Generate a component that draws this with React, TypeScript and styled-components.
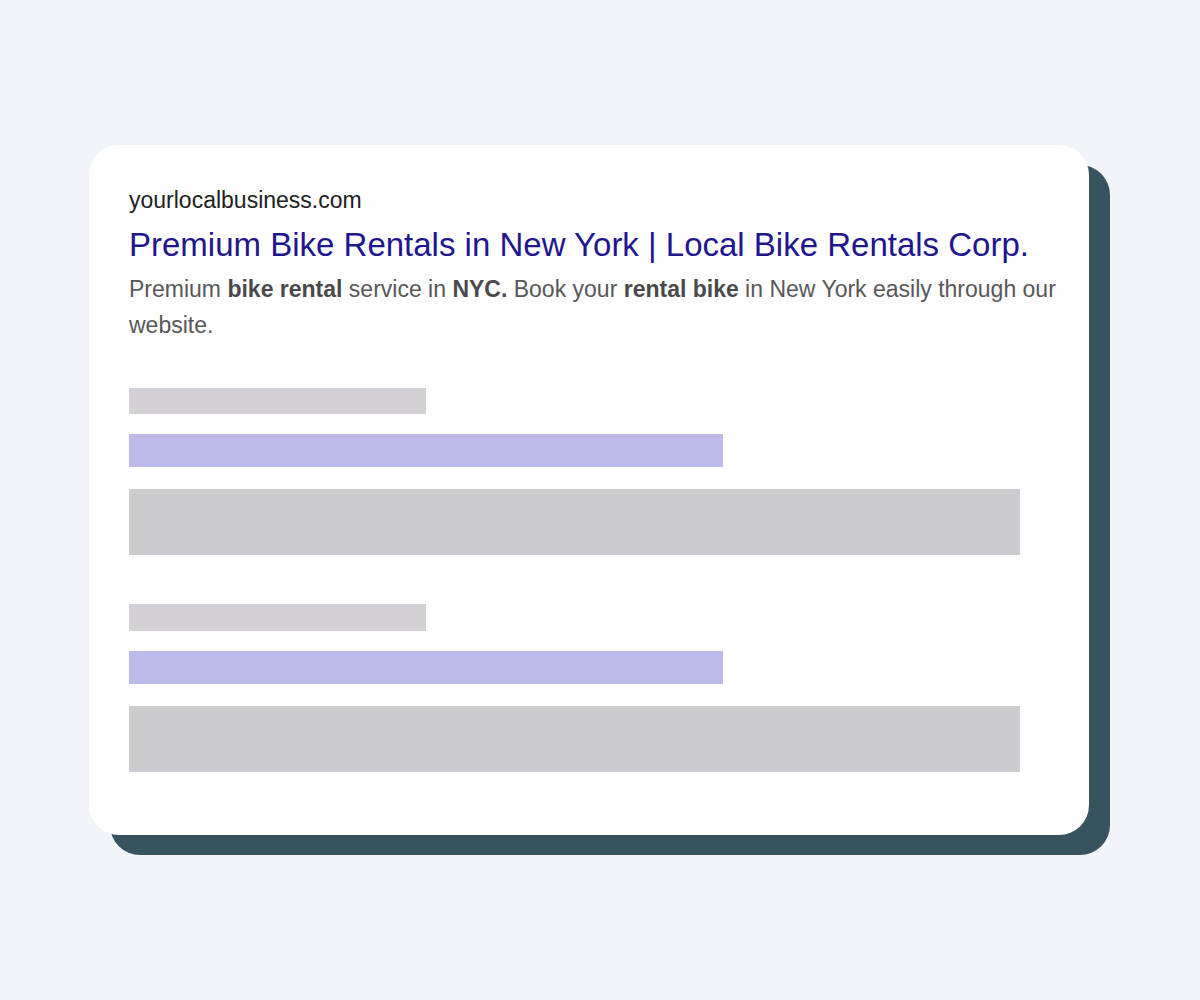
import React from "react";
import styled, { createGlobalStyle } from "styled-components";

const GlobalStyle = createGlobalStyle`
  html, body {
    margin: 0;
    padding: 0;
    background: #f1f5f9;
  }
  body {
    font-family: "Liberation Sans", Arial, sans-serif;
  }
`;

interface Placeholder {
  width: number;
  height: number;
  tone: "label" | "link" | "body";
}

const placeholderGroups: Placeholder[][] = [
  [
    { width: 297, height: 26, tone: "label" },
    { width: 594, height: 33, tone: "link" },
    { width: 891, height: 66, tone: "body" },
  ],
  [
    { width: 297, height: 27, tone: "label" },
    { width: 594, height: 33, tone: "link" },
    { width: 891, height: 66, tone: "body" },
  ],
];

function App() {
  return (
    <>
      <GlobalStyle />
      <Page>
        <Card>
          <Result>
            <Url>yourlocalbusiness.com</Url>
            <Title>Premium Bike Rentals in New York | Local Bike Rentals Corp.</Title>
            <Description>
              Premium <Strong>bike rental</Strong> service in <Strong>NYC.</Strong> Book your{" "}
              <Strong>rental bike</Strong> in New York easily through our website.
            </Description>
          </Result>
          <Skeleton>
            {placeholderGroups.map((group, i) => (
              <Group key={i}>
                {group.map((bar, j) => (
                  <Bar key={j} $tone={bar.tone} $width={bar.width} $height={bar.height} />
                ))}
              </Group>
            ))}
          </Skeleton>
        </Card>
      </Page>
    </>
  );
}

const Page = styled.div`
  width: 1200px;
  height: 1000px;
  padding: 145px 0 0 89px;
  box-sizing: border-box;
`;

const Card = styled.div`
  width: 1000px;
  height: 690px;
  box-sizing: border-box;
  padding: 42px 40px 0 40px;
  background: #fefefe;
  border-radius: 30px;
  box-shadow: 21px 20px 0 #36535f;
  display: flex;
  flex-direction: column;
`;

const Result = styled.div`
  display: flex;
  flex-direction: column;
  margin-bottom: 45px;
`;

const Url = styled.div`
  font-size: 23px;
  line-height: 26px;
  color: #202124;
`;

const Title = styled.div`
  font-size: 33px;
  line-height: 40px;
  color: #22168f;
  margin-top: 12px;
  white-space: nowrap;
`;

const Description = styled.p`
  margin: 6px 0 0 0;
  font-size: 23px;
  line-height: 36px;
  color: #58585a;
  width: 940px;
`;

const Strong = styled.span`
  font-weight: 700;
  color: #4a4a4c;
`;

const Skeleton = styled.div`
  display: flex;
  flex-direction: column;
  gap: 49px;
`;

const Group = styled.div`
  display: flex;
  flex-direction: column;
  gap: 20px;

  & > :last-child {
    margin-top: 2px;
  }
`;

const toneColors = {
  label: "#d3d1d5",
  link: "#bdb9eb",
  body: "#cccbcf",
};

const Bar = styled.div<{ $tone: Placeholder["tone"]; $width: number; $height: number }>`
  width: ${(p) => p.$width}px;
  height: ${(p) => p.$height}px;
  background: ${(p) => toneColors[p.$tone]};
`;

export default App;
